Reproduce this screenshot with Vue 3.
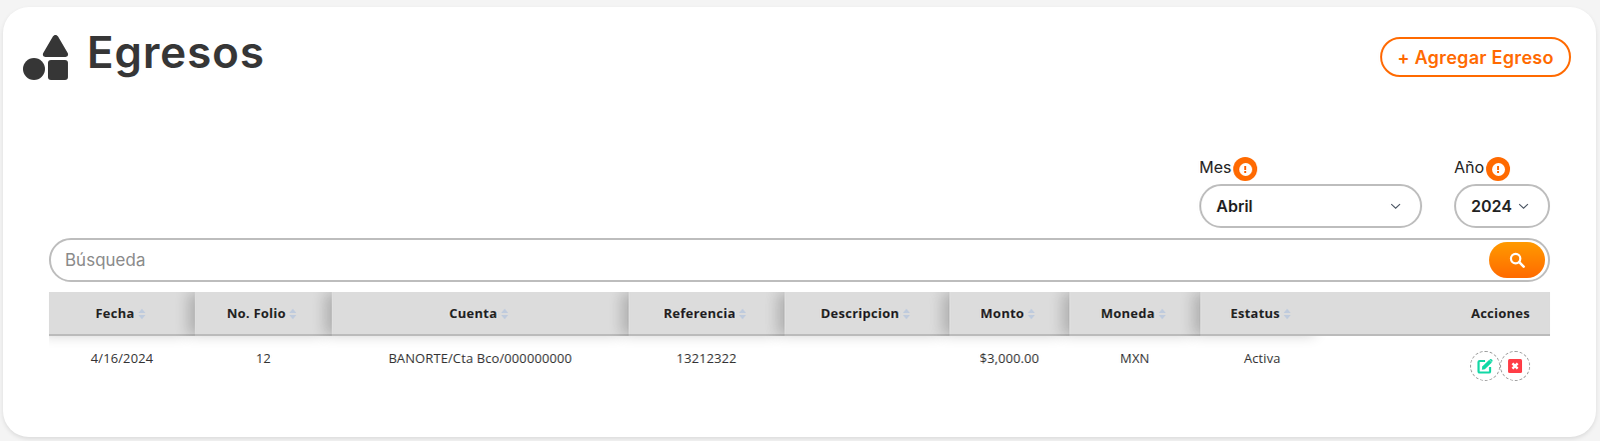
<template>
  <div class="page">
    <div class="card">
      <div class="top-bar">
        <div class="title-box">
          <svg class="title-icon" viewBox="0 0 46 46" width="46" height="46">
            <path d="M32.5 0c1.1 0 2 .6 2.6 1.5L44.6 17.8c1.2 2 .1 4.2-2.1 4.2H22.5c-2.2 0-3.3-2.2-2.1-4.2L29.9 1.5c.6-.9 1.5-1.5 2.6-1.5z" fill="#363636" />
            <circle cx="11" cy="34" r="11" fill="#363636" />
            <rect x="25" y="25" width="20" height="20" rx="3" fill="#363636" />
          </svg>
          <h1>Egresos</h1>
        </div>
        <button class="btn-add">+ Agregar Egreso</button>
      </div>

      <div class="filtros">
        <div class="filtro mes">
          <label>Mes<span class="badge"><i></i></span></label>
          <div class="select-box">
            <span>Abril</span>
            <svg viewBox="0 0 12 8" width="11" height="7"><path d="M1 1.2 6 6l5-4.8" fill="none" stroke="#4b5563" stroke-width="1.3" /></svg>
          </div>
        </div>
        <div class="filtro anio">
          <label>Año<span class="badge"><i></i></span></label>
          <div class="select-box">
            <span>2024</span>
            <svg viewBox="0 0 12 8" width="11" height="7"><path d="M1 1.2 6 6l5-4.8" fill="none" stroke="#4b5563" stroke-width="1.3" /></svg>
          </div>
        </div>
      </div>

      <div class="search-box">
        <input placeholder="Búsqueda" />
        <button class="btn-search">
          <svg viewBox="0 0 16 16" width="16" height="16">
            <circle cx="6.6" cy="6.6" r="4.7" fill="none" stroke="#fff" stroke-width="2.2" />
            <path d="M10.2 10.2 14.6 14.6" stroke="#fff" stroke-width="2.6" stroke-linecap="round" />
          </svg>
        </button>
      </div>

      <table class="tabla">
        <colgroup>
          <col v-for="c in columnas" :key="c.nombre" :style="{ width: c.ancho + 'px' }" />
          <col />
        </colgroup>
        <thead>
          <tr>
            <th v-for="c in columnas" :key="c.nombre">
              {{ c.nombre }}<svg class="sort" viewBox="0 0 8 12" width="8" height="12"><path d="M4 .8 7.6 5H.4zM4 11.2.4 7h7.2z" fill="#bfcbdd" /></svg>
            </th>
            <th class="acciones">Acciones</th>
          </tr>
        </thead>
        <tbody>
          <tr v-for="f in filas" :key="f.folio">
            <td>{{ f.fecha }}</td>
            <td>{{ f.folio }}</td>
            <td>{{ f.cuenta }}</td>
            <td>{{ f.referencia }}</td>
            <td>{{ f.descripcion }}</td>
            <td>{{ f.monto }}</td>
            <td>{{ f.moneda }}</td>
            <td>{{ f.estatus }}</td>
            <td class="acciones">
              <div class="acciones-box">
                <button class="btn-icon">
                  <svg viewBox="0 0 16 16" width="16" height="16">
                    <path d="M8 3H2.6C1.9 3 1.5 3.4 1.5 4.1v9.3c0 .7.4 1.1 1.1 1.1h9.3c.7 0 1.1-.4 1.1-1.1V9" fill="none" stroke="#12d8a5" stroke-width="2.2" />
                    <path d="M5.2 8.6 12.2 1.8l2.6 2.6-7 6.8-3 .5z" fill="#12d8a5" />
                    <path d="M13 1.2c.4-.4 1-.4 1.4 0l.9.9c.4.4.4 1 0 1.4l-.5.5-2.3-2.3z" fill="#12d8a5" />
                  </svg>
                </button>
                <button class="btn-icon">
                  <svg viewBox="0 0 14 14" width="14" height="14">
                    <rect width="14" height="14" rx="1.5" fill="#ff3d47" />
                    <path d="M4.4 4.4l5.2 5.2M9.6 4.4 4.4 9.6" stroke="#fff" stroke-width="2.4" />
                  </svg>
                </button>
              </div>
            </td>
          </tr>
        </tbody>
      </table>
    </div>
  </div>
</template>

<script setup>
const columnas = [
  { nombre: 'Fecha', ancho: 146 },
  { nombre: 'No. Folio', ancho: 137 },
  { nombre: 'Cuenta', ancho: 297 },
  { nombre: 'Referencia', ancho: 156 },
  { nombre: 'Descripcion', ancho: 165 },
  { nombre: 'Monto', ancho: 120 },
  { nombre: 'Moneda', ancho: 131 },
  { nombre: 'Estatus', ancho: 124 }
];

const filas = [
  {
    fecha: '4/16/2024',
    folio: 12,
    cuenta: 'BANORTE/Cta Bco/000000000',
    referencia: '13212322',
    descripcion: '',
    monto: '$3,000.00',
    moneda: 'MXN',
    estatus: 'Activa'
  }
];
</script>

<style>
html, body {
  background: #f4f4f4;
  overflow: hidden;
}
</style>

<style scoped>
.page {
  height: 441px;
  padding: 7px 4px 4px 3px;
  box-sizing: border-box;
  font-family: Inter, "Noto Sans", sans-serif;
}
.card {
  height: 430px;
  box-sizing: border-box;
  background: #fff;
  border-radius: 26px;
  box-shadow: 0 2px 4px rgba(0,0,0,0.1);
  padding: 0 25px 0 46px;
}
.top-bar {
  display: flex;
  justify-content: space-between;
  align-items: flex-start;
  margin-left: -26px;
  padding-top: 28px;
}
.title-box {
  display: flex;
  align-items: flex-start;
  gap: 18px;
}
.title-icon {
  flex: none;
}
h1 {
  margin: -11px 0 0;
  font-size: 44px;
  line-height: 56px;
  font-weight: 600;
  letter-spacing: 0.9px;
  color: #363636;
}
.btn-add {
  margin-top: 2px;
  width: 191px;
  height: 40px;
  background: #fff;
  border: 2px solid #ff6a00;
  border-radius: 20px;
  color: #ff6a00;
  font: 600 18px Inter, sans-serif;
  letter-spacing: 0.3px;
  padding: 0;
}
.filtros {
  display: flex;
  justify-content: flex-end;
  gap: 32px;
  margin-top: 76px;
  margin-right: 21px;
}
.filtro label {
  display: flex;
  height: 27px;
  align-items: flex-start;
  font-size: 16px;
  line-height: 20px;
  font-weight: 400;
  color: #222;
}
.badge {
  display: flex;
  align-items: center;
  justify-content: center;
  width: 24px;
  height: 24px;
  margin-left: 2px;
  background: #ff6a00;
  border-radius: 50%;
}
.badge i {
  position: relative;
  width: 13px;
  height: 13px;
  background: #fff;
  border-radius: 50%;
}
.badge i::after {
  content: "";
  position: absolute;
  left: 5.5px;
  top: 3px;
  width: 2px;
  height: 7px;
  background: linear-gradient(#ff6a00 0 4px, #fff 4px 5px, #ff6a00 5px);
}
.select-box {
  display: flex;
  align-items: center;
  justify-content: space-between;
  box-sizing: border-box;
  height: 44px;
  border: 2px solid #bdbdbd;
  border-radius: 22px;
  padding: 0 19px 0 15px;
  font-size: 16px;
  font-weight: 600;
  color: #222;
}
.mes .select-box { width: 223px; }
.anio .select-box { width: 96px; padding: 0 19px 0 15px; }
.search-box {
  display: flex;
  align-items: center;
  box-sizing: border-box;
  height: 44px;
  margin-top: 10px;
  margin-right: 21px;
  border: 2px solid #bdbdbd;
  border-radius: 22px;
  padding: 0 3px 0 14px;
}
.search-box input {
  flex: 1;
  border: none;
  outline: none;
  padding: 0;
  font: 400 17px Inter, sans-serif;
  color: #222;
}
.search-box input::placeholder {
  color: #8a8a8a;
}
.btn-search {
  display: flex;
  align-items: center;
  justify-content: center;
  width: 56px;
  height: 36px;
  border: none;
  border-radius: 18px;
  background: linear-gradient(#ff9a00, #ff6a00);
  padding: 0;
}
.tabla {
  width: 1502px;
  margin-top: 10px;
  border-collapse: separate;
  border-spacing: 0;
  table-layout: fixed;
  clip-path: inset(0 0 -30px 0);
  font-family: "Open Sans", sans-serif;
}
.tabla th {
  height: 44px;
  padding: 0;
  box-sizing: border-box;
  background: #dcdcdc;
  border-bottom: 2px solid #bbb;
  box-shadow: -8px 0 14px -1px rgba(0,0,0,0.2);
  font-size: 13px;
  font-weight: 700;
  letter-spacing: 0.25px;
  color: #222;
  text-align: center;
  white-space: nowrap;
}
.tabla th.acciones {
  box-shadow: none;
  text-align: right;
  padding-right: 20px;
}
.sort {
  margin-left: 3px;
  margin-right: 3px;
  vertical-align: -2px;
}
.tabla td {
  height: 42px;
  padding: 0 0 2px;
  font-size: 13px;
  letter-spacing: 0.1px;
  color: #333;
  text-align: center;
}
.tabla td.acciones {
  padding: 0;
}
.acciones-box {
  display: flex;
  justify-content: flex-end;
  padding-right: 20px;
  padding-top: 15px;
}
.btn-icon {
  display: flex;
  align-items: center;
  justify-content: center;
  box-sizing: border-box;
  width: 30px;
  height: 30px;
  padding: 0;
  background: #fff;
  border: 1px dashed #999;
  border-radius: 50%;
}
</style>
